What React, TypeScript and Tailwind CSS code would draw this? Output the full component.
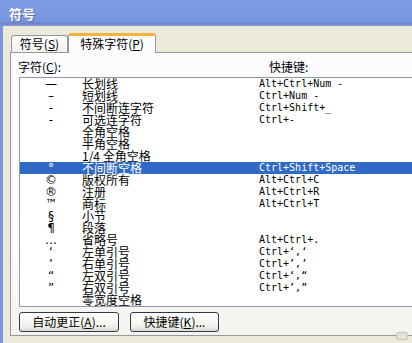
import React from "react";

const cjk = "font-['SimSun','Noto_Sans_CJK_SC',sans-serif]";
const mono = "font-['DejaVu_Sans_Mono',monospace]";

type Row = { sym: string; name: string; key: string };

const ROWS: Row[] = [
  { sym: "—", name: "长划线", key: "Alt+Ctrl+Num -" },
  { sym: "–", name: "短划线", key: "Ctrl+Num -" },
  { sym: "-", name: "不间断连字符", key: "Ctrl+Shift+_" },
  { sym: "-", name: "可选连字符", key: "Ctrl+-" },
  { sym: "", name: "全角空格", key: "" },
  { sym: "", name: "半角空格", key: "" },
  { sym: "", name: "1/4 全角空格", key: "" },
  { sym: "°", name: "不间断空格", key: "Ctrl+Shift+Space" },
  { sym: "©", name: "版权所有", key: "Alt+Ctrl+C" },
  { sym: "®", name: "注册", key: "Alt+Ctrl+R" },
  { sym: "™", name: "商标", key: "Alt+Ctrl+T" },
  { sym: "§", name: "小节", key: "" },
  { sym: "¶", name: "段落", key: "" },
  { sym: "…", name: "省略号", key: "Alt+Ctrl+." },
  { sym: "‘", name: "左单引号", key: "Ctrl+‘,‘" },
  { sym: "’", name: "右单引号", key: "Ctrl+’,’" },
  { sym: "“", name: "左双引号", key: "Ctrl+‘,“" },
  { sym: "”", name: "右双引号", key: "Ctrl+’,”" },
  { sym: "", name: "零宽度空格", key: "" },
];

const SELECTED = 7;

const Mn = ({ c }: { c: string }) => (
  <>
    (<span className="underline underline-offset-1">{c}</span>)
  </>
);

export default function App() {
  return (
    <div className={`w-[412px] h-[343px] overflow-hidden flex flex-col bg-[#ECE9D8] text-black ${cjk}`}>
      {/* Title bar */}
      <div className="h-[26px] shrink-0 flex items-center pl-[9px] bg-[linear-gradient(to_bottom,#7F9DE3_0%,#7896E0_80%,#6C83CB_92%,#8C9ED8_100%)]">
        <span className="text-white font-bold text-[13px] leading-none [text-shadow:1px_1px_0_#5A6FB8]">符号</span>
      </div>

      {/* Body */}
      <div className="flex-1 flex flex-col border-l-[3px] border-[#7C97DC] pl-[7px] pt-[6px] relative">
        {/* Tabs */}
        <div className="h-[20px] flex items-end text-[12px] leading-none">
          <div className="ml-[1px] w-[57px] h-[17px] flex items-center justify-center border border-b-0 border-[#919B9C] rounded-t-[3px] bg-[linear-gradient(to_bottom,#FFFFFF,#F0EFEA)]">
            符号<Mn c="S" />
          </div>
          <div className="w-[88px] h-[20px] flex items-center justify-center -mb-[1px] relative z-10 border-x border-[#919B9C] border-t-[3px] border-t-[#F4B33C] rounded-t-[3px] bg-[#FCFCFE] pb-[2px]">
            特殊字符<Mn c="P" />
          </div>
        </div>

        {/* Panel */}
        <div className="h-[284px] border-t border-l border-b border-[#919B9C] bg-[linear-gradient(to_bottom,#FCFCFE_0%,#FBFBFA_70%,#F4F3EE_100%)] pl-[8px] pt-[8px] flex flex-col">
          <div className="h-[12px] flex text-[12px] leading-[12px]">
            <span className="-ml-[1px] w-[251px]">
              字符<Mn c="C" />:
            </span>
            <span>快捷键:</span>
          </div>

          <div className="mt-[4px] w-[420px] h-[230px] border border-[#8E9AA8] bg-white">
            {ROWS.map((r, i) => {
              const sel = i === SELECTED;
              return (
                <div
                  key={i}
                  className={`h-[12px] flex items-center leading-[12px] ${sel ? "bg-[#316AC5] text-white" : ""}`}
                >
                  <span className="w-[62px] text-center text-[12px] font-['DejaVu_Sans',sans-serif] leading-[12px]">
                    {r.sym}
                  </span>
                  <span className="w-[177px] text-[12px] whitespace-nowrap">{r.name}</span>
                  <span className={`${mono} text-[10px] whitespace-pre`}>{r.key}</span>
                </div>
              );
            })}
          </div>

          <div className="mt-[5px] flex gap-[11px] text-[12px] leading-none">
            <button className="w-[100px] h-[20px] border border-[#2F3B4C] rounded-[3px] bg-[linear-gradient(to_bottom,#FFFFFF,#F3F2EE_70%,#DCDAD0)] flex items-center justify-center">
              自动更正<Mn c="A" />...
            </button>
            <button className="w-[89px] h-[20px] border border-[#2F3B4C] rounded-[3px] bg-[linear-gradient(to_bottom,#FFFFFF,#F3F2EE_70%,#DCDAD0)] flex items-center justify-center">
              快捷键<Mn c="K" />...
            </button>
          </div>
        </div>

        {/* size grip */}
        <div className="absolute right-[4px] bottom-[3px] w-[12px] h-[8px] border border-[#C8C5B8] rounded-[2px] bg-[#E4E1D4]" />
      </div>
    </div>
  );
}
